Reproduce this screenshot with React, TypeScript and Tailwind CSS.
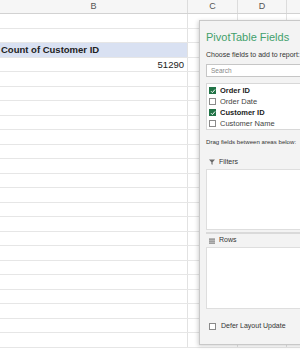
import React from 'react';

const ROWS = 23;

function Check({ on }: { on: boolean }) {
  return on ? (
    <span className="w-[7px] h-[7px] bg-[#217346] flex items-center justify-center shrink-0">
      <svg width="6" height="6" viewBox="0 0 6 6">
        <path d="M1 3.2 L2.4 4.6 L5 1.5" stroke="#fff" strokeWidth="1" fill="none" />
      </svg>
    </span>
  ) : (
    <span className="w-[7px] h-[7px] bg-white border border-[#8a8a8a] shrink-0" />
  );
}

const fields = [
  { name: 'Order ID', on: true },
  { name: 'Order Date', on: false },
  { name: 'Customer ID', on: true },
  { name: 'Customer Name', on: false },
];

export default function App() {
  return (
    <div className="relative w-[300px] h-[350px] overflow-hidden bg-white font-['Liberation_Sans',Arial,sans-serif] text-[#222]">
      {/* Column header */}
      <div className="flex h-[14px] bg-[#f6f6f6] border-b border-[#d2d2d2] text-[9px] text-[#555]">
        <div className="w-[188px] border-r border-[#dcdcdc] flex items-center justify-center">B</div>
        <div className="w-[50px] border-r border-[#dcdcdc] flex items-center justify-center">C</div>
        <div className="w-[49px] border-r border-[#dcdcdc] flex items-center justify-center">D</div>
        <div className="flex-1" />
      </div>

      {/* Grid rows */}
      {Array.from({ length: ROWS }).map((_, i) => (
        <div key={i} className="flex h-[14.5px] border-b border-[#e6e6e6]">
          <div
            className={`w-[188px] border-r border-[#e2e2e2] flex items-center text-[9.5px] leading-none ${
              i === 2 ? 'bg-[#d9e1f2] font-bold pl-[1px]' : ''
            } ${i === 3 ? 'justify-end pr-[3px]' : ''}`}
          >
            {i === 2 && 'Count of Customer ID'}
            {i === 3 && '51290'}
          </div>
          <div className="w-[50px] border-r border-[#e2e2e2]" />
          <div className="w-[49px] border-r border-[#e2e2e2]" />
          <div className="flex-1" />
        </div>
      ))}

      {/* PivotTable Fields pane */}
      <div className="absolute left-[199px] top-[20px] w-[130px] h-[325px] bg-[#f3f3f3] border border-[#c8c8c8] shadow-[-1px_1px_4px_rgba(0,0,0,0.18)] flex flex-col pl-[6px] text-[#333]">
        <div className="h-[22px] mt-[5px] flex items-center text-[11px] text-[#42a06b] whitespace-nowrap">PivotTable Fields</div>
        <div className="h-[10px] mt-[2px] flex items-center text-[7px] whitespace-nowrap">Choose fields to add to report:</div>
        <div className="mt-[4px] h-[13px] bg-white border border-[#c6c6c6] flex items-center pl-[4px] text-[6.5px] text-[#888]">Search</div>
        <div className="mt-[6px] h-[47px] bg-white border border-[#d8d8d8] pt-[1px] flex flex-col">
          {fields.map(f => (
            <div key={f.name} className="h-[11px] flex items-center gap-[4px] pl-[2px] text-[7.5px]">
              <Check on={f.on} />
              <span className={f.on ? 'font-bold text-[#222]' : 'text-[#444]'}>{f.name}</span>
            </div>
          ))}
        </div>
        <div className="mt-[7px] h-[10px] flex items-center text-[6.1px] whitespace-nowrap">Drag fields between areas below:</div>
        <div className="mt-[10px] h-[10px] flex items-center gap-[4px] pl-[3px] text-[7px]">
          <svg width="6" height="6" viewBox="0 0 6 6">
            <path d="M0 0.5 H6 L3.6 3.3 V5.8 L2.4 5.2 V3.3 Z" fill="#6a6a6a" />
          </svg>
          <span>Filters</span>
        </div>
        <div className="mt-[2px] h-[61px] bg-white border border-[#dedede]" />
        <div className="mt-[2px] h-[2px] bg-[#dadada]" />
        <div className="h-[13px] flex items-center gap-[4px] pl-[3px] text-[7px]">
          <svg width="6" height="6" viewBox="0 0 6 6">
            <rect x="0" y="0.5" width="6" height="1.2" fill="#7a7a7a" />
            <rect x="0" y="2.5" width="6" height="1.2" fill="#7a7a7a" />
            <rect x="0" y="4.5" width="6" height="1.2" fill="#7a7a7a" />
          </svg>
          <span>Rows</span>
        </div>
        <div className="h-[62px] bg-white border border-[#dedede]" />
        <div className="mt-[12px] flex items-center gap-[5px] pl-[3px] text-[7px]">
          <span className="w-[7px] h-[7px] bg-white border border-[#8a8a8a]" />
          <span>Defer Layout Update</span>
        </div>
      </div>
    </div>
  );
}
